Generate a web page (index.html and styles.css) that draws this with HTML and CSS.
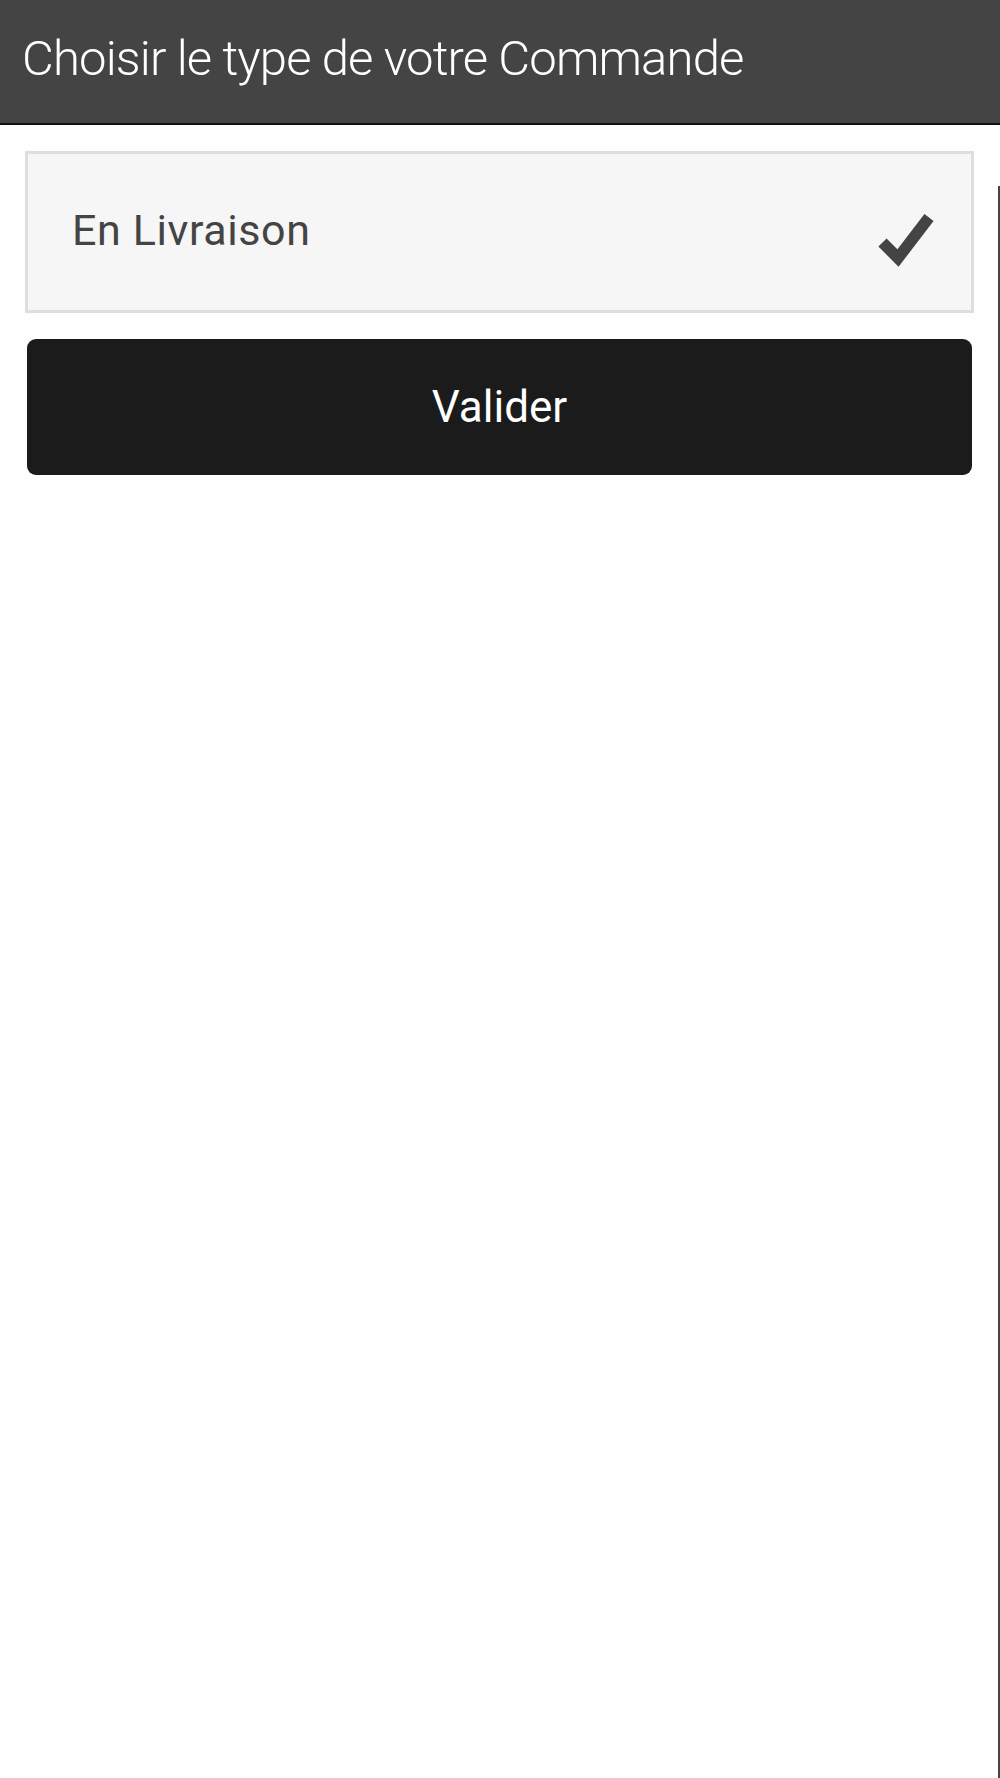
FILE: index.html
```html
<!DOCTYPE html>
<html lang="fr">
<head>
  <meta charset="UTF-8">
  <title>Type de commande</title>
  <link rel="stylesheet" href="styles.css">
</head>
<body>

  <header class="topbar">
    <h1>Choisir le type de votre Commande</h1>
  </header>

  <main class="screen">
    <div class="content">
      <div class="option selected">
        <span class="option-label">En Livraison</span>
        <svg class="check" width="64" height="70" viewBox="0 0 64 70">
          <polyline points="13.5,45.5 29,61 60,20.5" fill="none" stroke="#444" stroke-width="11.5" stroke-linejoin="miter"/>
        </svg>
      </div>

      <button class="validate" type="button">Valider</button>
    </div>
    <div class="edge"></div>
  </main>

</body>
</html>
```

FILE: styles.css
```css
body {
  margin: 0;
  font-family: Roboto, "Liberation Sans", sans-serif;
  background: #fefefe;
}

.topbar {
  background: #444;
  height: 123px;
  border-bottom: 2px solid #111;
  box-sizing: content-box;
}

.topbar h1 {
  margin: 0;
  padding: 30px 0 0 22px;
  font-size: 49px;
  font-weight: 300;
  letter-spacing: -0.85px;
  color: #fff;
  line-height: normal;
}

.screen {
  display: grid;
  grid-template-columns: 1fr 2px;
  min-height: 1653px;
}

.content {
  padding: 26px 24px 0 25px;
  display: flex;
  flex-direction: column;
  gap: 26px;
}

.edge {
  margin-top: 61px;
  background: #444;
}

.option {
  height: 162px;
  box-sizing: border-box;
  border: 3px solid #dedede;
  background: #f6f6f6;
  display: flex;
  align-items: center;
  justify-content: space-between;
  padding: 0 38px 0 44px;
}

.option-label {
  font-size: 43px;
  letter-spacing: 0.6px;
  color: #444;
  position: relative;
  top: -2px;
}

.check {
  overflow: visible;
}

.validate {
  margin: 0 2px;
  height: 136px;
  background: #1b1b1b;
  color: #fff;
  border: none;
  border-radius: 9px;
  font-family: Roboto, "Liberation Sans", sans-serif;
  font-size: 44px;
  cursor: pointer;
}
```
